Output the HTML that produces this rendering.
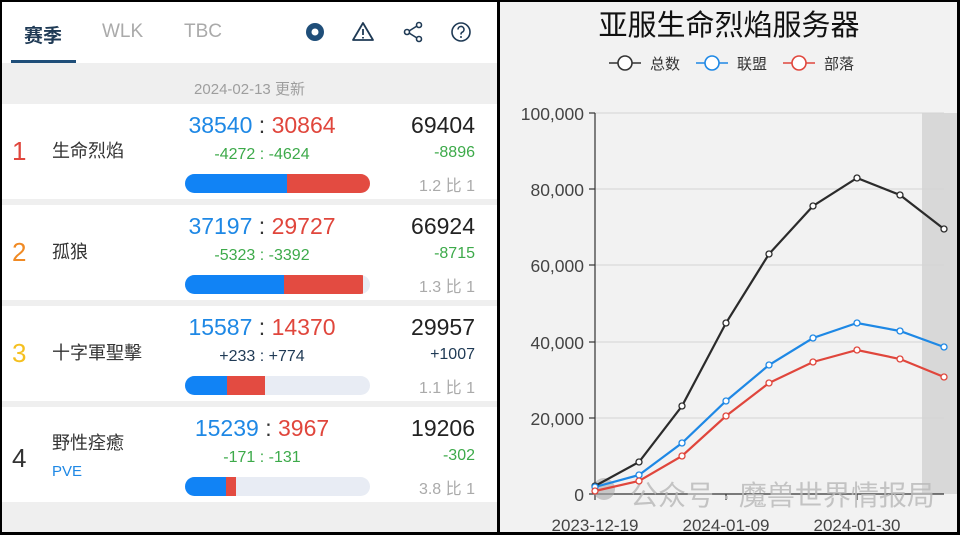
<!DOCTYPE html>
<html><head><meta charset="utf-8"><style>
*{margin:0;padding:0;box-sizing:border-box}
body{width:960px;height:535px;background:#000;position:relative;overflow:hidden;font-family:"Liberation Sans","Noto Sans CJK SC",sans-serif}
.l{position:absolute;left:2px;top:2px;width:495px;height:530px;background:#efefef;overflow:hidden}
.hdr{position:absolute;left:0;top:0;width:495px;height:61px;background:#fff}
.tab{position:absolute;top:19px;font-size:19px}
.ul{position:absolute;left:9px;top:58px;width:65px;height:3px;background:#1f4e79}
.date{position:absolute;left:0;top:76px;width:495px;text-align:center;font-size:15px;color:#9e9e9e}
.row{position:absolute;left:0;width:495px;height:95px;background:#fff}
.rk{position:absolute;left:10px;top:32px;font-size:26px}
.nm{position:absolute;left:50px;top:33px;font-size:18px;color:#333}
.pair{position:absolute;left:160px;width:200px;top:8px;text-align:center;font-size:23px;color:#333}
.dl{position:absolute;left:160px;width:200px;top:42px;text-align:center;font-size:16px}
.bar{position:absolute;left:183px;top:70px;width:185px;height:19px;border-radius:10px;background:#e8ecf4;overflow:hidden}
.bar i{position:absolute;top:0;height:19px}
.tot{position:absolute;right:22px;top:8px;font-size:23px;color:#222}
.td{position:absolute;right:22px;top:40px;font-size:16px}
.rt{position:absolute;right:22px;top:68px;font-size:16px;color:#aaa}
.b{color:#1e88e5}.r{color:#e0463c}.g{color:#3daa4a}
.rp{position:absolute;left:500px;top:2px;width:457px;height:530px;background:#f2f2f2;overflow:hidden}
</style></head><body>
<div class="l">
<div class="hdr">
<div class="tab" style="left:22px;color:#1f3a55;font-weight:bold">赛季</div>
<div class="tab" style="left:100px;color:#aaa">WLK</div>
<div class="tab" style="left:182px;color:#aaa">TBC</div>
<svg style="position:absolute;left:300px;top:18px" width="170" height="24" viewBox="0 0 170 24">
<circle cx="13" cy="12" r="9" fill="#1f4e79"/><circle cx="13" cy="12" r="3.5" fill="#fff"/>
<path d="M61 3 L71 20 L51 20 Z" fill="none" stroke="#1f3a55" stroke-width="1.8" stroke-linejoin="round"/><path d="M61 9v6M61 17v1.5" stroke="#1f3a55" stroke-width="1.8"/>
<circle cx="117" cy="5" r="2.5" fill="none" stroke="#1f3a55" stroke-width="1.6"/><circle cx="105" cy="12" r="2.5" fill="none" stroke="#1f3a55" stroke-width="1.6"/><circle cx="117" cy="19" r="2.5" fill="none" stroke="#1f3a55" stroke-width="1.6"/><path d="M107 11 L115 6 M107 13 L115 18" stroke="#1f3a55" stroke-width="1.6"/>
<circle cx="159" cy="12" r="9" fill="none" stroke="#1f3a55" stroke-width="1.6"/><path d="M156 9.5a3 3 0 1 1 4 2.8c-1 .5-1 1-1 2.2" fill="none" stroke="#1f3a55" stroke-width="1.6"/><circle cx="159" cy="17" r="1" fill="#1f3a55"/>
</svg>
<div class="ul"></div>
</div>
<div class="date">2024-02-13 更新</div>

<div class="row" style="top:102px">
<div class="rk" style="color:#e0463c">1</div><div class="nm">生命烈焰</div>
<div class="pair"><span class="b">38540</span> : <span class="r">30864</span></div>
<div class="dl g">-4272 : -4624</div>
<div class="bar"><i style="left:0;width:102px;background:#1183f5"></i><i style="left:102px;width:83px;background:#e34b41"></i></div>
<div class="tot">69404</div><div class="td g">-8896</div><div class="rt">1.2 比 1</div>
</div>
<div class="row" style="top:203px">
<div class="rk" style="color:#f08a24">2</div><div class="nm">孤狼</div>
<div class="pair"><span class="b">37197</span> : <span class="r">29727</span></div>
<div class="dl g">-5323 : -3392</div>
<div class="bar"><i style="left:0;width:99px;background:#1183f5"></i><i style="left:99px;width:79px;background:#e34b41"></i></div>
<div class="tot">66924</div><div class="td g">-8715</div><div class="rt">1.3 比 1</div>
</div>
<div class="row" style="top:304px">
<div class="rk" style="color:#f5c020">3</div><div class="nm">十字軍聖擊</div>
<div class="pair"><span class="b">15587</span> : <span class="r">14370</span></div>
<div class="dl" style="color:#1f3a55">+233 : +774</div>
<div class="bar"><i style="left:0;width:42px;background:#1183f5"></i><i style="left:42px;width:38px;background:#e34b41"></i></div>
<div class="tot">29957</div><div class="td" style="color:#1f3a55">+1007</div><div class="rt">1.1 比 1</div>
</div>
<div class="row" style="top:405px">
<div class="rk" style="color:#333;top:36px">4</div><div class="nm" style="top:22px">野性痊癒</div>
<div style="position:absolute;left:50px;top:56px;font-size:15px;color:#1e88e5">PVE</div>
<div class="pair"><span class="b">15239</span> : <span class="r">3967</span></div>
<div class="dl g">-171 : -131</div>
<div class="bar"><i style="left:0;width:41px;background:#1183f5"></i><i style="left:41px;width:10px;background:#e34b41"></i></div>
<div class="tot">19206</div><div class="td g">-302</div><div class="rt">3.8 比 1</div>
</div>
</div>

<div class="rp">
<svg width="457" height="530" viewBox="500 2 457 530" style="position:absolute;left:0;top:0" font-family="Liberation Sans, Noto Sans CJK SC, sans-serif">
<text x="729" y="35" text-anchor="middle" font-size="29" fill="#111">亚服生命烈焰服务器</text>
<g stroke-width="1.6" fill="#fff">
<line x1="609" y1="63" x2="641" y2="63" stroke="#333"/><circle cx="625" cy="63" r="7" stroke="#333"/>
<line x1="696" y1="63" x2="728" y2="63" stroke="#1e88e5"/><circle cx="712" cy="63" r="7" stroke="#1e88e5"/>
<line x1="783" y1="63" x2="815" y2="63" stroke="#e0463c"/><circle cx="799" cy="63" r="7" stroke="#e0463c"/>
</g>
<g font-size="15" fill="#333"><text x="650" y="69">总数</text><text x="737" y="69">联盟</text><text x="824" y="69">部落</text></g>
<rect x="922" y="113" width="35" height="381" fill="#d8d8d8"/>
<g stroke="#d4d4d4" stroke-width="1"><line x1="595" y1="113" x2="944" y2="113"/><line x1="595" y1="189" x2="944" y2="189"/><line x1="595" y1="265" x2="944" y2="265"/><line x1="595" y1="342" x2="944" y2="342"/><line x1="595" y1="418" x2="944" y2="418"/></g>
<g stroke="#333" stroke-width="1.2"><line x1="595" y1="113" x2="595" y2="500"/><line x1="589" y1="494" x2="944" y2="494"/>
<line x1="589" y1="113" x2="595" y2="113"/><line x1="589" y1="189" x2="595" y2="189"/><line x1="589" y1="265" x2="595" y2="265"/><line x1="589" y1="342" x2="595" y2="342"/><line x1="589" y1="418" x2="595" y2="418"/>
<line x1="726" y1="494" x2="726" y2="500"/><line x1="857" y1="494" x2="857" y2="500"/></g>
<g font-size="17.5" fill="#444" text-anchor="end"><text x="584" y="120">100,000</text><text x="584" y="196">80,000</text><text x="584" y="272">60,000</text><text x="584" y="349">40,000</text><text x="584" y="425">20,000</text><text x="584" y="501">0</text></g>
<g font-size="17" fill="#444" text-anchor="middle"><text x="595" y="531">2023-12-19</text><text x="726" y="531">2024-01-09</text><text x="857" y="531">2024-01-30</text></g>
<text x="630" y="505" font-size="28" fill="#bbb" opacity=".85">公众号 · 魔兽世界情报局</text>
<circle cx="604" cy="489" r="11" fill="#aaa" opacity=".6"/>
<g fill="none" stroke-width="2.2">
<polyline stroke="#2b2b2b" points="595,486 639,462 682,406 726,323 769,254 813,206 857,178 900,195 944,229"/>
<polyline stroke="#1e88e5" points="595,487 639,475 682,443 726,401 769,365 813,338 857,323 900,331 944,347"/>
<polyline stroke="#e0463c" points="595,491 639,481 682,456 726,416 769,383 813,362 857,350 900,359 944,377"/>
</g>
<g fill="#fff" stroke-width="1.3">
<g stroke="#2b2b2b"><circle cx="595" cy="486" r="3"/><circle cx="639" cy="462" r="3"/><circle cx="682" cy="406" r="3"/><circle cx="726" cy="323" r="3"/><circle cx="769" cy="254" r="3"/><circle cx="813" cy="206" r="3"/><circle cx="857" cy="178" r="3"/><circle cx="900" cy="195" r="3"/><circle cx="944" cy="229" r="3"/></g>
<g stroke="#1e88e5"><circle cx="595" cy="487" r="3"/><circle cx="639" cy="475" r="3"/><circle cx="682" cy="443" r="3"/><circle cx="726" cy="401" r="3"/><circle cx="769" cy="365" r="3"/><circle cx="813" cy="338" r="3"/><circle cx="857" cy="323" r="3"/><circle cx="900" cy="331" r="3"/><circle cx="944" cy="347" r="3"/></g>
<g stroke="#e0463c"><circle cx="595" cy="491" r="3"/><circle cx="639" cy="481" r="3"/><circle cx="682" cy="456" r="3"/><circle cx="726" cy="416" r="3"/><circle cx="769" cy="383" r="3"/><circle cx="813" cy="362" r="3"/><circle cx="857" cy="350" r="3"/><circle cx="900" cy="359" r="3"/><circle cx="944" cy="377" r="3"/></g>
</g>
</svg>
</div>
</body></html>
